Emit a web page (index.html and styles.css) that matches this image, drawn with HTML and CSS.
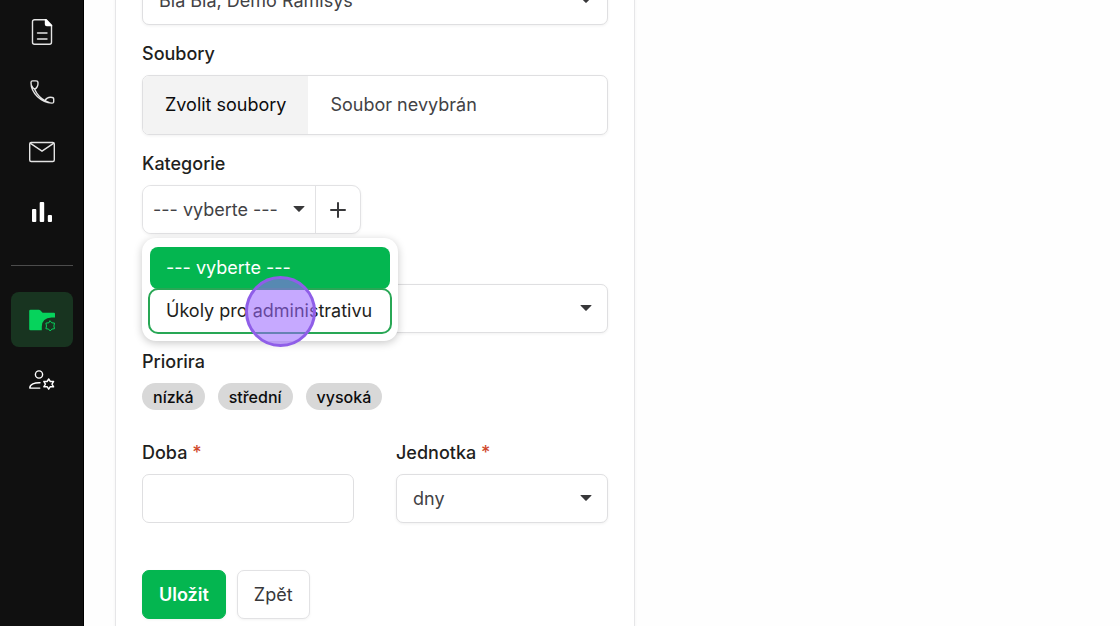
FILE: index.html
```html
<!DOCTYPE html>
<html lang="cs">
<head>
<meta charset="utf-8">
<title>Úkol</title>
<link rel="stylesheet" href="styles.css">
</head>
<body>
<div class="app">
  <nav class="sidebar" aria-label="Hlavní menu">
    <a class="nav-item" href="#" aria-label="Dokumenty">
      <svg class="icon" viewBox="0 0 30 30"><path d="M18 2.700H7.500a2 2 0 0 0-2 2v20.600a2 2 0 0 0 2 2h15a2 2 0 0 0 2-2V8.500M10.500 16h9.500M10.500 22h9.500"/><path class="solid" d="M17.800 2h1.700l5.700 6v1.200h-5.400a2 2 0 0 1-2-2z"/></svg>
    </a>
    <a class="nav-item" href="#" aria-label="Telefon">
      <svg class="icon" viewBox="0 0 30 30"><path d="M5.600 3.900h3.300q2 0 2.100 1.800C11.200 9 9.800 11 7.600 12.300C10 17.500 13.500 21.300 18 23.600Q19.800 20.300 23.500 20.300q3.200 0 3.200 1.700v2.600q0 1.600-1.800 1.500C14.500 25.600 4 16.500 4 5.500Q4 3.900 5.600 3.900zM7.600 12.300Q5.500 10.800 4.700 8.800M18 23.600q2 1.400 4 1.900"/></svg>
    </a>
    <a class="nav-item" href="#" aria-label="Zprávy">
      <svg class="icon" viewBox="0 0 30 30"><rect x="2.700" y="5.500" width="24.600" height="19" rx="1.500"/><path d="M3.500 6.300 15 14.200 26.500 6.300"/></svg>
    </a>
    <a class="nav-item" href="#" aria-label="Statistiky">
      <svg class="icon" viewBox="0 0 30 30"><rect class="solid" x="5" y="12" width="4.300" height="13" rx="1"/><rect class="solid" x="12.700" y="5" width="4.500" height="20" rx="1"/><rect class="solid" x="20.800" y="18" width="4.200" height="7" rx="1"/></svg>
    </a>
    <hr class="divider">
    <a class="nav-item active" href="#" aria-label="Úkoly">
      <svg class="icon" viewBox="0 0 30 30"><path class="solid" d="M3.500 4.800h8.300q1 0 1.700.8l2.100 2.200H27q1 0 1 1v3.700h-3.500q-9.500.5-9.700 9v3.800H3.500q-1.300 0-1.300-1.300V6.100q0-1.300 1.300-1.300z"/><path class="thin" d="m23.200 16 1.600 1.800 2.700.3-.6 2.900.6 2.700-2.700.4-1.600 1.900-1.600-1.900-2.700-.4.600-2.700-.6-2.900 2.700-.3z"/></svg>
    </a>
    <a class="nav-item" href="#" aria-label="Uživatelé">
      <svg class="icon bright" viewBox="0 0 30 30"><circle cx="12" cy="9.500" r="3.600"/><path d="M13 17.700C7.500 17.500 2.800 19.400 2.800 23.100h10"/><path d="m21.700 14 1.600 2.500 3.300-.1-1.600 2.700 1.600 2.700-3.300-.1-1.600 2.500-1.600-2.500-3.300.1 1.600-2.700-1.600-2.700 3.300.1z"/></svg>
    </a>
  </nav>
  <main class="content">
    <form class="card">
      <div class="select-wrap">
        <select class="control" aria-label="Řešitel"><option>Bla Bla, Demo Ramisys</option></select>
        <svg class="caret" viewBox="0 0 12 6"><path d="M1 0h10q1 0 .3.800L6.600 5.600q-.6.600-1.200 0L.7.800Q0 0 1 0z"/></svg>
      </div>

      <span class="label" id="files-label">Soubory</span>
      <label class="file">
        <input class="visually-hidden" type="file" aria-labelledby="files-label">
        <span class="file-button">Zvolit soubory</span>
        <span class="file-name">Soubor nevybrán</span>
      </label>

      <label class="label" for="category">Kategorie</label>
      <div class="category">
        <div class="group">
          <div class="select-wrap">
            <select class="control compact" id="category"><option>--- vyberte ---</option></select>
            <svg class="caret" viewBox="0 0 12 6"><path d="M1 0h10q1 0 .3.800L6.600 5.600q-.6.600-1.200 0L.7.800Q0 0 1 0z"/></svg>
          </div>
          <button class="add" type="button" aria-label="Přidat"><svg viewBox="0 0 16 16"><path d="M8 1v14M1 8h14"/></svg></button>
        </div>
        <div class="menu" role="listbox" aria-label="Kategorie">
          <button class="option selected" type="button" role="option" aria-selected="true">--- vyberte ---</button>
          <button class="option focused" type="button" role="option" aria-selected="false">Úkoly pro administrativu</button>
          <span class="pointer"></span>
        </div>
      </div>

      <label class="label" for="project"></label>
      <div class="select-wrap">
        <select class="control" id="project" aria-label="Projekt"><option></option></select>
        <svg class="caret" viewBox="0 0 12 6"><path d="M1 0h10q1 0 .3.800L6.600 5.600q-.6.600-1.200 0L.7.800Q0 0 1 0z"/></svg>
      </div>

      <span class="label">Priorira</span>
      <div class="chips">
        <button class="chip" type="button">nízká</button>
        <button class="chip" type="button">střední</button>
        <button class="chip" type="button">vysoká</button>
      </div>

      <div class="columns">
        <div>
          <label class="label" for="duration">Doba <span class="required">*</span></label>
          <input class="control" id="duration" type="text">
        </div>
        <div>
          <label class="label" for="unit">Jednotka <span class="required">*</span></label>
          <div class="select-wrap">
            <select class="control" id="unit"><option>dny</option></select>
            <svg class="caret" viewBox="0 0 12 6"><path d="M1 0h10q1 0 .3.800L6.600 5.600q-.6.600-1.200 0L.7.800Q0 0 1 0z"/></svg>
          </div>
        </div>
      </div>

      <div class="actions">
        <button class="btn primary" type="submit">Uložit</button>
        <button class="btn" type="button">Zpět</button>
      </div>
    </form>
  </main>
</div>
</body>
</html>
```

FILE: styles.css
```css
* { box-sizing: border-box; }
body {
  margin: 0;
  background: #fefefe;
  color: #1f1f21;
  font: 18px/22px Inter, "Liberation Sans", sans-serif;
}
button, input, select { font: inherit; color: inherit; margin: 0; }
.app { display: flex; height: 100vh; overflow: hidden; }

.sidebar {
  flex: none;
  width: 84px;
  padding: 4px 10px 4px 11px;
  display: flex;
  flex-direction: column;
  gap: 5px;
  background: #101010;
  border-right: 1px solid #000;
}
.nav-item {
  height: 55px;
  display: flex;
  align-items: center;
  justify-content: center;
  border-radius: 8px;
  color: #e4e4e4;
}
.nav-item.active { background: #183420; color: #06d35c; }
.icon {
  width: 30px;
  height: 30px;
  fill: none;
  stroke: currentColor;
  stroke-width: 1.4;
  stroke-linejoin: round;
  stroke-linecap: round;
}
.icon .solid { fill: currentColor; stroke: none; }
.icon .thin { stroke-width: 1; }
.icon.bright { color: #fff; }
.nav-item .solid { color: #fff; }
.nav-item.active .solid { color: #06d35c; }
.divider { width: 100%; height: 1px; margin: 21px 0; border: 0; background: #4c4c4c; }

.content { flex: 1; padding-left: 31px; }
.card {
  max-width: 520px;
  margin-top: -24px;
  padding: 0 26px 40px;
  background: #fff;
  border: solid #e6e6e8;
  border-width: 0 1px;
  box-shadow: 0 0 3px rgba(0, 0, 0, .05);
}
.label {
  display: block;
  min-height: 22px;
  margin: 18px 0 10px;
  font-weight: 500;
}
.required { color: #d0492c; }

.control {
  display: block;
  width: 100%;
  height: 49px;
  padding: 0 16px;
  color: #424245;
  background: #fff;
  border: 1px solid #dfdfe1;
  border-radius: 7px;
  appearance: none;
}
select.control { box-shadow: 0 1px 3px rgba(0, 0, 0, .06); }
.select-wrap { position: relative; }
.caret {
  position: absolute;
  right: 16px;
  top: 21px;
  width: 12px;
  height: 6px;
  fill: #38383a;
  pointer-events: none;
}

.file {
  display: flex;
  align-items: stretch;
  height: 60px;
  border: 1px solid #dfdfe1;
  border-radius: 7px;
  overflow: hidden;
  box-shadow: 0 1px 3px rgba(0, 0, 0, .06);
}
.file-button, .file-name { display: flex; align-items: center; padding: 0 22px; }
.file-button { background: #f3f3f3; color: #0c0c0d; }
.file-name { color: #424245; }
.visually-hidden { position: absolute; width: 1px; height: 1px; opacity: 0; }

.category { position: relative; }
.group {
  display: inline-flex;
  vertical-align: top;
  height: 49px;
  border: 1px solid #e2e2e4;
  border-radius: 9px;
  background: #fff;
  overflow: hidden;
  box-shadow: 0 1px 3px rgba(0, 0, 0, .06);
}
.group .control.compact {
  width: 172px;
  height: 47px;
  padding: 0 10px;
  border: 0;
  box-shadow: none;
}
.group .caret { right: 10px; top: 20px; }
.add {
  width: 45px;
  padding: 0;
  display: flex;
  align-items: center;
  justify-content: center;
  border: 0;
  border-left: 1px solid #e2e2e4;
  background: none;
}
.add svg { width: 16px; height: 16px; stroke: #38383a; stroke-width: 2; stroke-linecap: round; }

.menu {
  position: absolute;
  z-index: 2;
  top: 53px;
  left: 0;
  min-width: 256px;
  padding: 9px 8px;
  display: flex;
  flex-direction: column;
  gap: 1px;
  background: #fff;
  border-radius: 14px;
  box-shadow: 0 2px 8px rgba(0, 0, 0, .22);
}
.option {
  height: 42px;
  padding: 0 16px;
  border: 0;
  border-radius: 8px;
  background: #fff;
  color: #1f1f21;
  text-align: left;
  white-space: nowrap;
}
.option.selected { background: #04b650; color: #fff; }
.option.focused { outline: 2px solid #28a755; outline-offset: 0; }
.pointer {
  position: absolute;
  top: 38px;
  left: 103px;
  width: 71px;
  height: 71px;
  border: 3px solid #8f5ee8;
  border-radius: 50%;
  background: rgba(154, 101, 255, .56);
}

.chips { display: flex; gap: 13px; }
.chip {
  height: 27px;
  padding: 0 11px;
  border: 0;
  border-radius: 14px;
  background: #d8d8d8;
  color: #0c0c0d;
  font-size: 16px;
  font-weight: 500;
}
.columns {
  display: grid;
  grid-template-columns: 1fr 1fr;
  gap: 42px;
  margin-top: 32px;
}
.columns .label { margin-top: 0; }
.actions { display: flex; gap: 11px; margin-top: 47px; }
.btn {
  height: 49px;
  padding: 0 16px;
  border: 1px solid #e2e2e4;
  border-radius: 7px;
  background: #fff;
  color: #38383a;
  box-shadow: 0 1px 3px rgba(0, 0, 0, .05);
}
.btn.primary { background: #04b650; border-color: #04b650; color: #fff; font-weight: 600; }
```
